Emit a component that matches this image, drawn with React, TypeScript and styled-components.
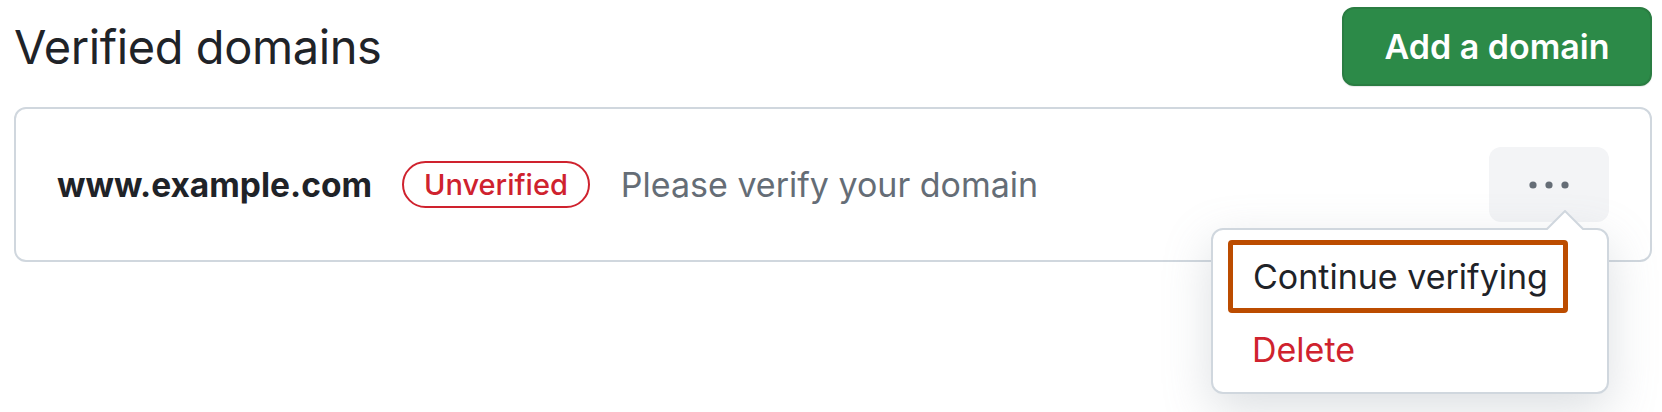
import React from "react";
import styled, { createGlobalStyle } from "styled-components";

const Global = createGlobalStyle`
  html, body { margin: 0; padding: 0; background: #ffffff; min-height: 100%; }
  body { font-family: Inter, "Liberation Sans", Arial, sans-serif; color: #1f2328; }
`;

const Page = styled.div`
  min-height: 412px;
  box-sizing: border-box;
  padding: 7px 10px 0 14px;
`;

const Header = styled.header`
  display: flex;
  align-items: center;
  justify-content: space-between;
  margin-bottom: 21px;
`;

const Title = styled.h1`
  margin: 0;
  font-size: 47px;
  font-weight: 400;
  letter-spacing: -0.4px;
  color: #1f2328;
`;

const PrimaryButton = styled.button`
  height: 79px;
  width: 310px;
  border-radius: 12px;
  border: 2px solid #2a7d42;
  background: #2c8a48;
  color: #ffffff;
  font-family: inherit;
  font-size: 34px;
  font-weight: 600;
  box-shadow: 0 1px 1px rgba(31, 35, 40, 0.1);
`;

const Box = styled.section`
  border: 2px solid #d0d7de;
  border-radius: 12px;
  height: 155px;
  box-sizing: border-box;
`;

const Row = styled.div`
  height: 100%;
  display: flex;
  align-items: center;
  padding: 0 41px 0 41px;
`;

const Domain = styled.span`
  font-size: 33.5px;
  font-weight: 700;
  color: #1f2328;
`;

const Badge = styled.span`
  margin-left: 30px;
  display: inline-flex;
  align-items: center;
  height: 47px;
  box-sizing: border-box;
  padding: 0 20px;
  border: 2px solid #cf222e;
  border-radius: 999px;
  color: #cf222e;
  font-size: 29px;
  font-weight: 500;
`;

const Note = styled.span`
  margin-left: 31px;
  font-size: 34px;
  color: #656d76;
`;

const Spacer = styled.div`
  flex: 1;
`;

const MenuAnchor = styled.div`
  position: relative;
`;

const DotsButton = styled.button`
  width: 120px;
  height: 75px;
  border: none;
  border-radius: 12px;
  background: #f3f4f6;
  display: flex;
  align-items: center;
  justify-content: center;
  padding: 0;
`;

const Menu = styled.div`
  position: absolute;
  top: 81px;
  right: 0;
  width: 398px;
  box-sizing: border-box;
  background: #ffffff;
  border: 2px solid #d0d7de;
  border-radius: 12px;
  padding: 10px 0 6px;
  box-shadow: 0 16px 48px rgba(140, 149, 159, 0.3);
  z-index: 2;
`;

const Caret = styled.svg`
  position: absolute;
  top: -20px;
  right: 23px;
`;

const Item = styled.div<{ $danger?: boolean; $highlight?: boolean }>`
  height: 73px;
  box-sizing: border-box;
  display: flex;
  align-items: center;
  font-size: 34px;
  color: ${(p) => (p.$danger ? "#cf222e" : "#1f2328")};
  margin: ${(p) => (p.$highlight ? "0 39px 0 15px" : "0")};
  padding-left: ${(p) => (p.$highlight ? "20px" : "39px")};
  border: ${(p) => (p.$highlight ? "5px solid #bc4c00" : "none")};
  border-radius: 4px;
`;

export default function App() {
  return (
    <>
      <Global />
      <Page>
        <Header>
          <Title>Verified domains</Title>
          <PrimaryButton>Add a domain</PrimaryButton>
        </Header>
        <Box>
          <Row>
            <Domain>www.example.com</Domain>
            <Badge>Unverified</Badge>
            <Note>Please verify your domain</Note>
            <Spacer />
            <MenuAnchor>
              <DotsButton aria-label="More">
                <svg width="40" height="8" viewBox="0 0 40 8">
                  <circle cx="4" cy="4" r="3.6" fill="#656d76" />
                  <circle cx="20" cy="4" r="3.6" fill="#656d76" />
                  <circle cx="36" cy="4" r="3.6" fill="#656d76" />
                </svg>
              </DotsButton>
              <Menu>
                <Caret width="38" height="21" viewBox="0 0 38 21">
                  <path d="M0 20 L19 1 L38 20" fill="#ffffff" stroke="#d0d7de" strokeWidth="2" />
                  <rect x="0" y="20" width="38" height="1" fill="#ffffff" />
                </Caret>
                <Item $highlight>Continue verifying</Item>
                <Item $danger>Delete</Item>
              </Menu>
            </MenuAnchor>
          </Row>
        </Box>
      </Page>
    </>
  );
}
